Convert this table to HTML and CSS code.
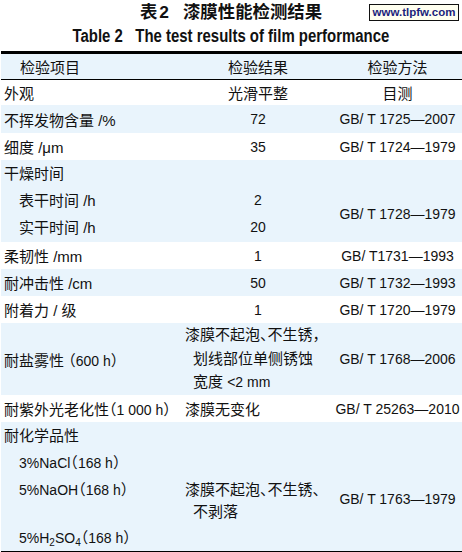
FILE: index.html
```html
<!DOCTYPE html>
<html lang="zh-CN">
<head>
<meta charset="utf-8">
<title>表2 漆膜性能检测结果</title>
<link rel="stylesheet" href="styles.css">
</head>
<body>
<div class="page">
  <div class="mark">www.tlpfw.com</div>
  <h1 class="title-cn">表<span class="tn">2</span>漆膜性能检测结果</h1>
  <h2 class="title-en"><span class="squeeze">Table 2&nbsp;&nbsp;&nbsp;The test results of film performance</span></h2>

  <div class="table">
    <div class="row head blue h25">
      <div class="c1 hc1">检验项目</div>
      <div class="c2">检验结果</div>
      <div class="c3 cn">检验方法</div>
    </div>

    <div class="row h25">
      <div class="c1">外观</div>
      <div class="c2">光滑平整</div>
      <div class="c3 cn">目测</div>
    </div>

    <div class="row blue h28">
      <div class="c1">不挥发物含量 /%</div>
      <div class="c2 num">72</div>
      <div class="c3">GB/ T 1725—2007</div>
    </div>

    <div class="row h27">
      <div class="c1">细度 /μm</div>
      <div class="c2 num">35</div>
      <div class="c3">GB/ T 1724—1979</div>
    </div>

    <div class="row blue h82 top">
      <div class="c1 lines">
        <div>干燥时间</div>
        <div class="sub">表干时间 /h</div>
        <div class="sub">实干时间 /h</div>
      </div>
      <div class="c2 num lines">
        <div>&nbsp;</div>
        <div>2</div>
        <div>20</div>
      </div>
      <div class="c3 dry">GB/ T 1728—1979</div>
    </div>

    <div class="row h27">
      <div class="c1">柔韧性 /mm</div>
      <div class="c2 num">1</div>
      <div class="c3">GB/ T1731—1993</div>
    </div>

    <div class="row blue h27">
      <div class="c1">耐冲击性 /cm</div>
      <div class="c2 num">50</div>
      <div class="c3">GB/ T 1732—1993</div>
    </div>

    <div class="row h27">
      <div class="c1">附着力 / 级</div>
      <div class="c2 num">1</div>
      <div class="c3">GB/ T 1720—1979</div>
    </div>

    <div class="row blue h72">
      <div class="c1">耐盐雾性 （<span class="lat">600 h</span>）</div>
      <div class="c2 para salt">漆膜不起泡、不生锈，<br>划线部位单侧锈蚀<br>宽度 <span class="lat">&lt;2 mm</span></div>
      <div class="c3">GB/ T 1768—2006</div>
    </div>

    <div class="row h27">
      <div class="c1">耐紫外光老化性（<span class="lat">1 000 h</span>）</div>
      <div class="c2 para">漆膜无变化</div>
      <div class="c3">GB/ T 25263—2010</div>
    </div>

    <div class="row blue h129 top">
      <div class="c1 lines">
        <div>耐化学品性</div>
        <div class="sub"><span class="lat">3%NaCl</span>（<span class="lat">168 h</span>）</div>
        <div class="sub"><span class="lat">5%NaOH</span>（<span class="lat">168 h</span>）</div>
        <div class="gap"></div>
        <div class="sub"><span class="lat">5%H<sub>2</sub>SO<sub>4</sub></span>（<span class="lat">168 h</span>）</div>
      </div>
      <div class="c2 para chem">漆膜不起泡、不生锈、<br>不剥落</div>
      <div class="c3 chem3">GB/ T 1763—1979</div>
    </div>
  </div>
</div>
</body>
</html>
```

FILE: styles.css
```css
html, body {
  margin: 0;
  padding: 0;
  background: #ffffff;
}

body {
  font-family: "Liberation Sans", "Noto Sans CJK SC", sans-serif;
  font-size: 15px;
  color: #111111;
}

.page {
  position: relative;
  width: 462px;
  height: 552px;
  overflow: hidden;
}

.mark {
  position: absolute;
  top: 4px;
  left: 369px;
  width: 90px;
  height: 17px;
  box-sizing: border-box;
  border: 1px solid #111111;
  background: #fffff0;
  color: #1c1f7c;
  font-family: "Liberation Sans", sans-serif;
  font-weight: 700;
  font-size: 11.5px;
  line-height: 15px;
  text-align: center;
}

.title-cn {
  margin: 0;
  height: 24px;
  line-height: 24px;
  font-size: 17.4px;
  font-weight: 700;
  text-align: center;
  font-family: "Liberation Sans", "Noto Sans CJK SC", sans-serif;
}

.title-cn .tn {
  margin-left: 2px;
  margin-right: 14px;
}

.title-en {
  margin: 0 0 3px 0;
  height: 24px;
  line-height: 24px;
  font-size: 18px;
  font-weight: 700;
  text-align: center;
  font-family: "Liberation Sans", sans-serif;
  white-space: nowrap;
}

.squeeze {
  display: inline-block;
  transform: scaleX(0.83);
  transform-origin: 50% 50%;
}

.table {
  margin-left: 1px;
  border-top: 3px solid #000000;
  border-bottom: 1px solid #000000;
}

.row {
  display: grid;
  grid-template-columns: 182px 150px 1fr;
  align-items: center;
  background: #ffffff;
}

.row.blue {
  background: #e9f4fc;
}

.row.top {
  align-items: start;
}

.head {
  border-bottom: 1px solid #000000;
}

.h25 { height: 25px; }
.h27 { height: 27px; }
.h28 { height: 28px; }
.h72 { height: 72px; }
.h82 { height: 82px; }
.h129 { height: 129px; }

.c1 {
  padding-left: 3px;
  white-space: nowrap;
  font-feature-settings: "halt";
}

.hc1 {
  padding-left: 19px;
}

.c2 {
  text-align: center;
  white-space: nowrap;
}

.c3 {
  text-align: center;
  font-size: 14px;
  white-space: nowrap;
}

.c3.cn {
  font-size: 15px;
}

.num {
  font-size: 14px;
}

.lines > div {
  line-height: 27px;
  height: 27px;
}

.lines > .sub {
  padding-left: 15px;
}

.lines > .gap {
  height: 21px;
}

.para {
  text-align: left;
  padding-left: 10px;
  text-indent: -8px;
  font-feature-settings: "halt";
}

.salt {
  line-height: 23.5px;
}

.lat {
  font-size: 14px;
}

.dry {
  padding-top: 27px;
  line-height: 54px;
}

.chem {
  padding-top: 57px;
  line-height: 21.5px;
}

.chem3 {
  padding-top: 64px;
  line-height: 27px;
}

sub {
  font-size: 10px;
  line-height: 0;
  vertical-align: -3px;
}
```
